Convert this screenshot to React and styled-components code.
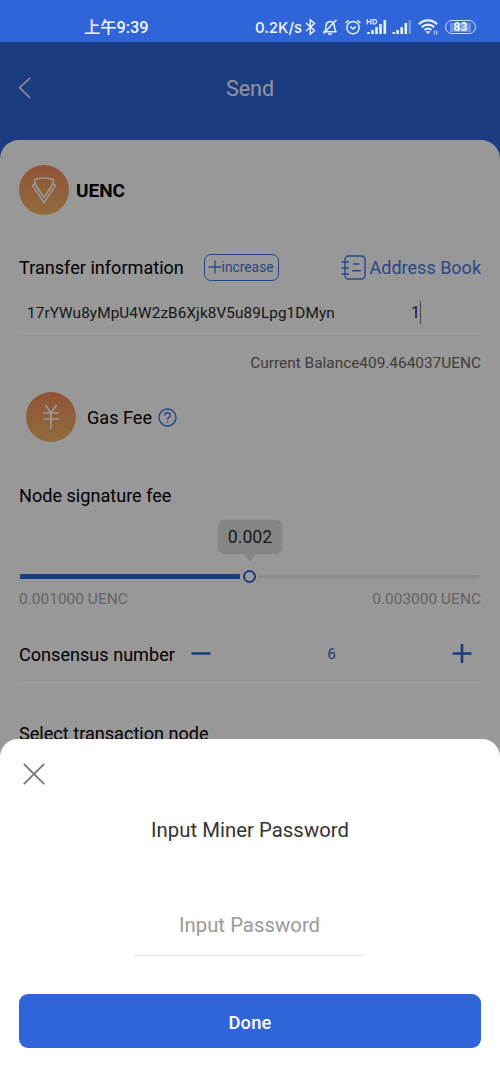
import React from "react";
import styled, { createGlobalStyle } from "styled-components";

const BLUE = "#2f65d9";

const GlobalStyle = createGlobalStyle`
  * { box-sizing: border-box; }
  body {
    margin: 0;
    background: #fff;
    font-family: Roboto, "Noto Sans CJK SC", sans-serif;
  }
  button, input { font: inherit; border: 0; padding: 0; background: none; }
  svg { display: block; flex: none; }
`;

const Screen = styled.div`
  width: 500px;
  height: 1083px;
  display: flex;
  flex-direction: column;
  overflow: hidden;
`;

const StatusBar = styled.header`
  height: 42px;
  flex: none;
  padding: 13px 24px 0 84px;
  display: flex;
  justify-content: space-between;
  background: ${BLUE};
  color: #f2f8ff;
`;

const Clock = styled.span`
  padding-top: 1px;
  font-size: 16.3px;
  line-height: 28px;
  font-weight: 500;
`;

const StatusIcons = styled.div`
  display: flex;
  align-items: center;
  height: 28px;
`;

const Speed = styled.span`
  width: 50px;
  font-family: Inter, sans-serif;
  font-size: 15px;
  font-weight: 500;
  letter-spacing: 0;
  white-space: nowrap;
`;

const StatusIcon = styled.svg`
  width: ${(p) => p.$w}px;
  height: 18px;
  margin-right: ${(p) => p.$gap || 0}px;
  fill: none;
  stroke: #e6f2ff;
  stroke-width: 1.5;
`;

const Battery = styled.span`
  width: 31px;
  height: 14px;
  border: 1.5px solid #cfe2ff;
  border-radius: 7px;
  padding: 1px 5px;
  font-size: 12px;
  line-height: 11px;
  font-weight: 700;
  text-align: center;
  background: linear-gradient(#6a92e6, #6a92e6) center / 21px 9px no-repeat;
`;

const Body = styled.main`
  position: relative;
  flex: 1;
  min-height: 0;
  background: ${BLUE};
`;

const TitleBar = styled.div`
  height: 98px;
  padding: 0 24px 6px 18px;
  display: grid;
  grid-template-columns: 24px 1fr 18px;
  align-items: center;
`;

const Title = styled.h1`
  margin: 0;
  font-size: 21.5px;
  font-weight: 400;
  color: #fff;
  opacity: 0.95;
  text-align: center;
`;

const Card = styled.section`
  height: 943px;
  padding: 25px 19px 0;
  border-radius: 19px 19px 0 0;
  background: #fefefe;
  color: #000;
`;

const Row = styled.div`
  display: flex;
  align-items: center;
  height: ${(p) => p.$h}px;
  margin-top: ${(p) => p.$top || 0}px;
  justify-content: ${(p) => p.$justify || "flex-start"};
`;

const LinedRow = styled(Row)`
  border-bottom: 1px solid #f3f3f3;
`;

const Coin = styled.span`
  width: 50px;
  height: 50px;
  margin-left: ${(p) => p.$indent || 0}px;
  border-radius: 50%;
  display: grid;
  place-items: center;
  background: linear-gradient(#f28a5c, #f0b465);
`;

const TokenName = styled.span`
  margin-left: 7px;
  padding-top: 1px;
  font-size: 19px;
  font-weight: 700;
`;

const Label = styled.span`
  font-size: 18.1px;
  white-space: nowrap;
`;

const GasLabel = styled(Label)`
  margin: 0 6px 0 11px;
`;

const IncreaseButton = styled.button`
  display: flex;
  align-items: center;
  width: 75px;
  height: 27px;
  margin-left: auto;
  padding: 0 3px;
  border: 1.5px solid #3a70e2;
  border-radius: 7px;
  color: #4478e4;
  font-size: 13.8px;
`;

const AddressBook = styled.button`
  display: flex;
  align-items: center;
  gap: 4px;
  margin-left: 62px;
  color: #4478e4;
  font-size: 18px;
`;

const Address = styled.span`
  margin-left: 8px;
  padding-top: 4px;
  width: 384px;
  font-size: 15.3px;
  letter-spacing: 0.1px;
  color: #2a2a2a;
`;

const Amount = styled.span`
  height: 23px;
  margin-top: 3px;
  line-height: 24px;
  border-right: 1px solid #777;
  font-size: 16px;
  color: #2a2a2a;
`;

const Balance = styled.span`
  font-size: 15.4px;
  color: #696969;
`;

const Bubble = styled.div`
  position: relative;
  width: 64px;
  height: 34px;
  margin: 5px auto 0;
  border-radius: 7px;
  background: #dedede;
  box-shadow: 0 0 2px #dedede;
  font-size: 17.7px;
  line-height: 35px;
  text-align: center;
  color: #2c2c2c;
  &::after {
    content: "";
    position: absolute;
    left: 26px;
    top: 34px;
    border: 6px solid transparent;
    border-top: 8px solid #dedede;
    border-bottom: 0;
  }
`;

const SliderRow = styled.div`
  height: 20px;
  margin: 12px 2px 0 1px;
  display: flex;
  align-items: center;
`;

const Track = styled.span`
  flex: 1;
  height: ${(p) => (p.$filled ? 5 : 3)}px;
  background: ${(p) => (p.$filled ? BLUE : "#e9e9e9")};
`;

const Thumb = styled.span`
  width: 19px;
  height: 19px;
  border-radius: 50%;
  background: #fff;
  border: 3px solid #fff;
  box-shadow: 0 0 2px rgba(0, 0, 0, 0.12);
  display: flex;
  &::before {
    content: "";
    flex: 1;
    border: 2px solid ${BLUE};
    border-radius: 50%;
  }
`;

const RangeLabel = styled.span`
  font-size: 15.4px;
  letter-spacing: 0.05px;
  color: #a6a6a6;
`;

const Stepper = styled.div`
  flex: 1;
  display: flex;
  align-items: center;
  justify-content: space-between;
  margin: 0 9px 0 16px;
  color: ${BLUE};
  font-size: 15.3px;
`;

const Scrim = styled.div`
  position: absolute;
  inset: 0;
  background: rgba(0, 0, 0, 0.4);
`;

const Sheet = styled.section`
  position: absolute;
  left: 0;
  right: 0;
  bottom: 0;
  height: 344px;
  padding: 24px 19px 0;
  border-radius: 18px 18px 0 0;
  background: #fff;
  display: flex;
  flex-direction: column;
`;

const CloseButton = styled.button`
  align-self: flex-start;
  margin-left: 4px;
  height: 22px;
`;

const SheetTitle = styled.h2`
  margin: 30px 0 0;
  height: 30px;
  line-height: 30px;
  font-size: 20.3px;
  font-weight: 400;
  letter-spacing: 0.05px;
  color: #333;
  text-align: center;
`;

const PasswordInput = styled.input`
  align-self: center;
  width: 231px;
  height: 61px;
  margin: 50px 1px 0 0;
  border-bottom: 1px solid #e8e8e8;
  border-radius: 0;
  outline: none;
  font-size: 20.3px;
  letter-spacing: 0.05px;
  text-align: center;
  &::placeholder { color: #999; opacity: 1; }
`;

const DoneButton = styled.button`
  height: 54px;
  margin-top: 38px;
  padding-top: 2px;
  border-radius: 9px;
  background: ${BLUE};
  color: #fff;
  font-size: 18.3px;
  font-weight: 500;
  letter-spacing: 0.2px;
`;

function StatusGlyphs() {
  return (
    <>
      <StatusIcon $w={11} $gap={6} viewBox="0 0 11 18">
        <path d="M1 5 L9.5 12.5 L5.3 16.2 V1.8 L9.5 5.5 L1 13" />
      </StatusIcon>
      <StatusIcon $w={17} $gap={6} viewBox="0 0 17 18">
        <path d="M1.2 13.8 H14.6 M3 13 C4.2 11 3.6 9.5 4 7.2 C4.8 2.6 10.6 2.2 12 6.2 C12.8 9 12 11 14 13.4 M1.6 15.6 L14.5 1.8 M6 16 H10" />
      </StatusIcon>
      <StatusIcon $w={17} $gap={4} viewBox="0 0 17 18">
        <circle cx="8" cy="9.6" r="6.2" />
        <path d="M5.3 8.6 L8 11 L10.8 8.6 M0.6 5 L3.6 2.2 M15.4 5 L12.4 2.2" />
      </StatusIcon>
      <StatusIcon $w={21} $gap={5} viewBox="0 0 21 18">
        <path d="M1.2 1 V6.5 M4.8 1 V6.5 M1.2 3.7 H4.8 M7 1.5 H8.3 C11.2 1.5 11.2 6 8.3 6 H7 Z" strokeWidth="1.2" />
        <path d="M2.5 16 V14 M6.5 16 V12 M10.5 16 V9 M14.5 16 V6 M18.8 16 V2" strokeWidth="2.6" />
      </StatusIcon>
      <StatusIcon $w={20} $gap={6} viewBox="0 0 20 18">
        <path d="M1.8 16 V14 M5.6 16 V12 M9.7 16 V9 M13.8 16 V5" strokeWidth="2.6" />
        <path d="M17.8 16 V2" strokeWidth="2.4" opacity="0.35" />
      </StatusIcon>
      <StatusIcon $w={21} $gap={6} viewBox="0 0 21 18">
        <path d="M1 6.2 C6 1.2 14 1.2 19 6.2 M3.8 9.2 C7.2 5.7 12.8 5.7 16.2 9.2 M6.6 12 C8.6 10 11.4 10 13.4 12" strokeWidth="2.2" />
        <path d="M7.5 13.2 H12.5 L10 16.2 Z" fill="#e6f2ff" stroke="none" />
        <path d="M16.5 16.5 V12.5 M18.8 12.5 V16.5" strokeWidth="1.2" opacity="0.8" />
      </StatusIcon>
    </>
  );
}

export default function App() {
  return (
    <Screen>
      <GlobalStyle />
      <StatusBar>
        <Clock>上午9:39</Clock>
        <StatusIcons>
          <Speed>0.2K/s</Speed>
          <StatusGlyphs />
          <Battery>83</Battery>
        </StatusIcons>
      </StatusBar>
      <Body>
        <TitleBar>
          <svg width="14" height="22" viewBox="0 0 14 22" fill="none" stroke="#fff" strokeWidth="1.4">
            <path d="M12.2 0.8 L1.7 10.8 L12.2 20.9" />
          </svg>
          <Title>Send</Title>
        </TitleBar>
        <Card>
          <Row $h={50}>
            <Coin>
              <svg width="26" height="30" viewBox="0 0 26 30" fill="none" stroke="#fff" strokeWidth="1.6">
                <path d="M3.4 4.6 Q13 1.4 22.6 4.6 L21.2 10 M3.4 4.6 L4.8 10 M4.2 8.4 L1.6 10.6 L13 27.6 L24.4 10.6 L21.8 8.4 M4.8 10 L13 22.6 L21.2 10" />
              </svg>
            </Coin>
            <TokenName>UENC</TokenName>
          </Row>
          <Row $h={40} $top={32}>
            <Label>Transfer information</Label>
            <IncreaseButton>
              <svg width="14" height="14" viewBox="0 0 14 14" stroke="currentColor" strokeWidth="1.3">
                <path d="M7 0.5 V13.5 M0.5 7 H13.5" />
              </svg>
              increase
            </IncreaseButton>
            <AddressBook>
              <svg width="25" height="25" viewBox="0 0 25 25" fill="none" stroke="currentColor" strokeWidth="1.4">
                <rect x="4" y="1" width="20" height="23" rx="3.5" />
                <path d="M0.5 7 H8 M0.5 13 H8 M0.5 19 H8 M12 9 H18.5 M11 15.7 H20" />
              </svg>
              Address Book
            </AddressBook>
          </Row>
          <LinedRow $h={49}>
            <Address>17rYWu8yMpU4W2zB6Xjk8V5u89Lpg1DMyn</Address>
            <Amount>1</Amount>
          </LinedRow>
          <Row $h={54} $justify="flex-end">
            <Balance>Current Balance409.464037UENC</Balance>
          </Row>
          <Row $h={50} $top={2}>
            <Coin $indent={7}>
              <svg width="18" height="28" viewBox="0 0 18 28" fill="none" stroke="#fff" strokeWidth="1.7">
                <path d="M3.5 2 L9 10 L14.5 2 M1.5 10 H16.5 M1.5 16 H16.5 M9 10 V26" />
              </svg>
            </Coin>
            <GasLabel>Gas Fee</GasLabel>
            <svg width="19" height="19" viewBox="0 0 19 19" fill="none" stroke="#3a70e2" strokeWidth="1.4">
              <circle cx="9.5" cy="9.5" r="8.5" />
              <path d="M6.6 7.6 C6.6 3.8 12.4 3.8 12.4 7.3 C12.4 9.3 9.5 9.2 9.5 11.8 M9.5 13.2 V14.6" />
            </svg>
          </Row>
          <Row $h={40} $top={33}>
            <Label>Node signature fee</Label>
          </Row>
          <Bubble>0.002</Bubble>
          <SliderRow>
            <Track $filled />
            <Thumb />
            <Track />
          </SliderRow>
          <Row $h={20} $top={3} $justify="space-between">
            <RangeLabel>0.001000 UENC</RangeLabel>
            <RangeLabel>0.003000 UENC</RangeLabel>
          </Row>
          <LinedRow $h={53} $top={19}>
            <Label>Consensus number</Label>
            <Stepper>
              <svg width="20" height="20" viewBox="0 0 20 20" stroke={BLUE} strokeWidth="2.6">
                <path d="M0.5 9.5 H19.5" />
              </svg>
              <span>6</span>
              <svg width="20" height="20" viewBox="0 0 20 20" stroke={BLUE} strokeWidth="2.6">
                <path d="M0.5 9.5 H19.5 M10 0 V19" />
              </svg>
            </Stepper>
          </LinedRow>
          <Row $h={40} $top={32}>
            <Label>Select transaction node</Label>
          </Row>
        </Card>
        <Scrim />
        <Sheet>
          <CloseButton aria-label="Close">
            <svg width="22" height="22" viewBox="0 0 22 22" stroke="#777" strokeWidth="1.8">
              <path d="M0.8 0.8 L21.2 21.2 M21.2 0.8 L0.8 21.2" />
            </svg>
          </CloseButton>
          <SheetTitle>Input Miner Password</SheetTitle>
          <PasswordInput type="password" placeholder="Input Password" />
          <DoneButton>Done</DoneButton>
        </Sheet>
      </Body>
    </Screen>
  );
}
